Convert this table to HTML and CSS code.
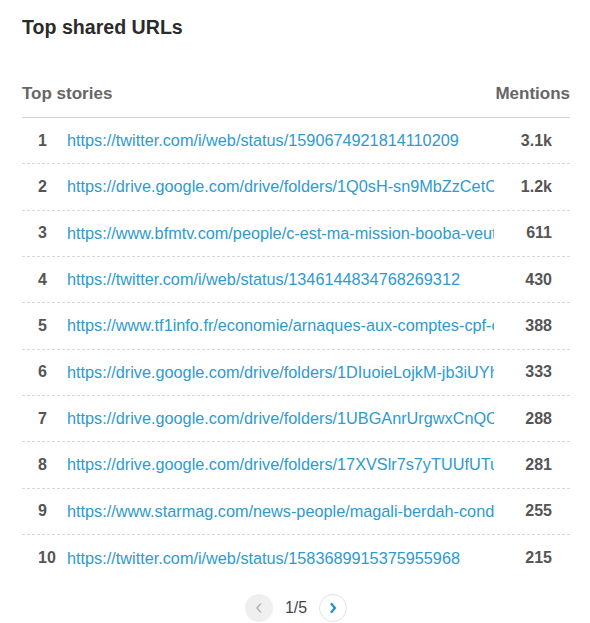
FILE: index.html
```html
<!DOCTYPE html>
<html>
<head>
<meta charset="utf-8">
<link rel="stylesheet" href="styles.css">
</head>
<body>
<div class="card">
  <h2 class="title">Top shared URLs</h2>
  <div class="table">
    <div class="head">
      <span class="h-stories">Top stories</span>
      <span class="h-mentions">Mentions</span>
    </div>
    <div class="row"><span class="num">1</span><a class="url">https://twitter.com/i/web/status/1590674921814110209</a><span class="count">3.1k</span></div>
    <div class="row"><span class="num">2</span><a class="url">https://drive.google.com/drive/folders/1Q0sH-sn9MbZzCetC</a><span class="count">1.2k</span></div>
    <div class="row"><span class="num">3</span><a class="url">https://www.bfmtv.com/people/c-est-ma-mission-booba-veut</a><span class="count">611</span></div>
    <div class="row"><span class="num">4</span><a class="url">https://twitter.com/i/web/status/1346144834768269312</a><span class="count">430</span></div>
    <div class="row"><span class="num">5</span><a class="url">https://www.tf1info.fr/economie/arnaques-aux-comptes-cpf-c</a><span class="count">388</span></div>
    <div class="row"><span class="num">6</span><a class="url">https://drive.google.com/drive/folders/1DIuoieLojkM-jb3iUYh</a><span class="count">333</span></div>
    <div class="row"><span class="num">7</span><a class="url">https://drive.google.com/drive/folders/1UBGAnrUrgwxCnQC</a><span class="count">288</span></div>
    <div class="row"><span class="num">8</span><a class="url">https://drive.google.com/drive/folders/17XVSlr7s7yTUUfUTu</a><span class="count">281</span></div>
    <div class="row"><span class="num">9</span><a class="url">https://www.starmag.com/news-people/magali-berdah-cond</a><span class="count">255</span></div>
    <div class="row last"><span class="num">10</span><a class="url">https://twitter.com/i/web/status/1583689915375955968</a><span class="count">215</span></div>
  </div>
  <div class="pager">
    <span class="pbtn prev"><svg width="10" height="12" viewBox="0 0 10 12"><path d="M6.5 2 L3 6 L6.5 10" fill="none" stroke="#b5b5b5" stroke-width="1.6" stroke-linecap="round" stroke-linejoin="round"/></svg></span>
    <span class="plabel">1/5</span>
    <span class="pbtn next"><svg width="10" height="12" viewBox="0 0 10 12"><path d="M3.5 2 L7 6 L3.5 10" fill="none" stroke="#1f8ed0" stroke-width="2.2" stroke-linecap="round" stroke-linejoin="round"/></svg></span>
  </div>
</div>
</body>
</html>
```
FILE: styles.css
```css
* { box-sizing: border-box; }
html, body { margin: 0; padding: 0; background: #fff; }
body {
  font-family: "Liberation Sans", Arial, sans-serif;
  color: #444;
}
.card {
  width: 590px;
  padding: 15px 20px 0 22px;
}
.title {
  margin: 0;
  font-size: 19.6px;
  line-height: 24px;
  font-weight: bold;
  color: #2b2b2b;
}
.table {
  margin-top: 32px;
}
.head {
  display: flex;
  justify-content: space-between;
  align-items: center;
  height: 47px;
  border-bottom: 1px solid #d4d4d4;
  font-size: 17px;
  font-weight: bold;
  color: #666;
  padding-bottom: 1px;
}
.row {
  display: grid;
  grid-template-columns: 45px 427px 1fr;
  align-items: center;
  height: 46.33px;
  border-bottom: 1px dashed #d8d8d8;
  font-size: 16px;
}
.row.last { border-bottom: none; }
.num {
  padding-left: 16px;
  font-weight: bold;
  color: #555;
}
.url {
  font-size: 16.25px;
  color: #2e9ad0;
  white-space: nowrap;
  overflow: hidden;
  text-decoration: none;
}
.count {
  text-align: right;
  padding-right: 18px;
  font-weight: bold;
  color: #555;
}
.pager {
  display: flex;
  justify-content: center;
  align-items: center;
  gap: 12px;
  margin-top: 13px;
}
.pbtn {
  width: 28px;
  height: 28px;
  border-radius: 50%;
  display: flex;
  align-items: center;
  justify-content: center;
}
.prev { background: #efefef; }
.next { background: #fff; border: 1px solid #e2e2e2; }
.plabel {
  font-size: 16px;
  color: #444;
}
```
